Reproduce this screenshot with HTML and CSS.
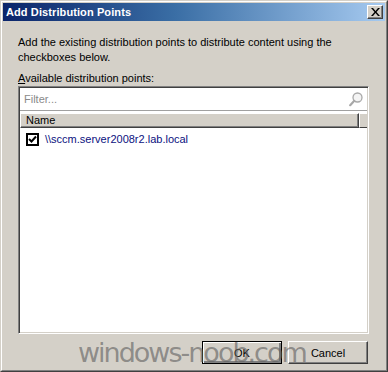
FILE: index.html
```html
<!DOCTYPE html>
<html lang="en">
<head>
    <meta charset="UTF-8">
    <title>Add Distribution Points</title>
    <link rel="stylesheet" href="styles.css">
</head>
<body>
    <div class="window">
        <div class="window-inner">
            <div class="title-bar">
                <span class="title-text">Add Distribution Points</span>
                <button class="close-button">
                    <svg width="9" height="8" viewBox="0 0 9 8">
                        <path d="M0 0h2l2.5 3 2.5-3h2L5.5 4 9 8H7L4.5 5 2 8H0l3.5-4z" fill="#000"/>
                    </svg>
                </button>
            </div>
            <div class="content">
                <p class="intro">Add the existing distribution points to distribute content using the checkboxes below.</p>
                <div class="label"><u>A</u>vailable distribution points:</div>
                <div class="list-box">
                    <div class="filter-row">
                        <span class="filter-text">Filter...</span>
                        <svg class="search-icon" width="14" height="15" viewBox="0 0 14 15">
                            <circle cx="8.5" cy="5.5" r="4.5" fill="#f4f4f4" stroke="#a8a8a8" stroke-width="1.3"/>
                            <path d="M5.3 8.8L1.2 13.2" stroke="#a8a8a8" stroke-width="2.2" stroke-linecap="round"/>
                        </svg>
                    </div>
                    <div class="list-header">
                        <div class="header-cell">Name</div>
                        <div class="header-cell header-filler"></div>
                    </div>
                    <div class="list-body">
                        <div class="list-row">
                            <span class="checkbox">
                                <svg width="9" height="9" viewBox="0 0 9 9">
                                    <path d="M1 4l2.5 2.5L8 1.5" stroke="#000" stroke-width="2" fill="none"/>
                                </svg>
                            </span>
                            <span class="row-text">\\sccm.server2008r2.lab.local</span>
                        </div>
                    </div>
                </div>
                <div class="button-row">
                    <button class="dialog-button default-button">OK</button>
                    <button class="dialog-button">Cancel</button>
                </div>
            </div>
        </div>
        <div class="watermark">windows-noob.com</div>
    </div>
</body>
</html>
```

FILE: styles.css
```css
body {
    margin: 0;
    background-color: #d4d0c8;
    font-family: "Liberation Sans", Arial, sans-serif;
    font-size: 11px;
    color: #000;
}

.window {
    position: relative;
    width: 388px;
    height: 372px;
    box-sizing: border-box;
    border: 1px solid;
    border-color: #d4d0c8 #404040 #404040 #d4d0c8;
    overflow: hidden;
}

.window-inner {
    height: 100%;
    box-sizing: border-box;
    border: 1px solid;
    border-color: #fff #808080 #808080 #fff;
    padding: 1px;
}

.title-bar {
    height: 18px;
    display: flex;
    align-items: center;
    justify-content: space-between;
    padding: 0 2px 0 3px;
    background: linear-gradient(to right, #0a246a, #3a6ea5 45%, #a6caf0);
}

.title-text {
    color: #fff;
    font-weight: bold;
    font-size: 11px;
    font-family: "Liberation Sans", Arial, sans-serif;
    letter-spacing: 0.1px;
}

.close-button {
    width: 16px;
    height: 14px;
    padding: 0;
    display: flex;
    align-items: center;
    justify-content: center;
    background-color: #d4d0c8;
    border: 1px solid;
    border-color: #fff #404040 #404040 #fff;
    box-shadow: inset -1px -1px 0 #808080;
}

.content {
    padding: 0 16px 0 15px;
}

.intro {
    margin: 14px 0 0;
    line-height: 15px;
    width: 320px;
}

.label {
    margin-top: 6px;
    line-height: 15px;
}

.list-box {
    height: 244px;
    display: flex;
    flex-direction: column;
    border: 1px solid;
    border-color: #808080 #fff #fff #808080;
    box-shadow: inset 1px 1px 0 #404040, inset -1px -1px 0 #d4d0c8;
    padding: 1px;
    background-color: #fff;
}

.filter-row {
    height: 22px;
    display: flex;
    align-items: center;
    justify-content: space-between;
    padding: 0 4px 0 4px;
    border-bottom: 1px solid #a0a0a0;
}

.filter-text {
    color: #8a8a8a;
    font-size: 11px;
}

.search-icon {
    margin-top: 1px;
}

.list-header {
    display: flex;
    height: 15px;
    margin-top: 2px;
}

.header-cell {
    flex: 1;
    background-color: #d4d0c8;
    border: 1px solid;
    border-color: #fff #404040 #404040 #fff;
    box-shadow: inset -1px -1px 0 #808080;
    padding-left: 5px;
    line-height: 13px;
}

.header-filler {
    flex: 0 0 7px;
    padding: 0;
    border-right: none;
    box-shadow: none;
}

.list-body {
    flex: 1;
}

.list-row {
    display: flex;
    align-items: center;
    height: 16px;
    margin-top: 3px;
    padding-left: 6px;
}

.checkbox {
    width: 9px;
    height: 9px;
    border: 2px solid #000;
    display: flex;
    align-items: center;
    justify-content: center;
    background-color: #fff;
}

.row-text {
    margin-left: 6px;
    color: #0b1180;
}

.button-row {
    display: flex;
    justify-content: flex-end;
    gap: 6px;
    margin-top: 7px;
    padding-right: 1px;
}

.dialog-button {
    width: 80px;
    height: 23px;
    padding: 0;
    font-family: "Liberation Sans", Arial, sans-serif;
    font-size: 11px;
    color: #000;
    background-color: #d4d0c8;
    border: 1px solid;
    border-color: #fff #404040 #404040 #fff;
    box-shadow: inset -1px -1px 0 #808080;
}

.default-button {
    border: 1px solid #000;
    box-shadow: inset 1px 1px 0 #fff, inset -2px -2px 0 #808080;
}

.watermark {
    position: absolute;
    left: 77px;
    top: 336px;
    font-family: "DejaVu Sans", Verdana, sans-serif;
    font-size: 27px;
    letter-spacing: -2px;
    color: rgba(95, 95, 95, 0.62);
    pointer-events: none;
}
```
